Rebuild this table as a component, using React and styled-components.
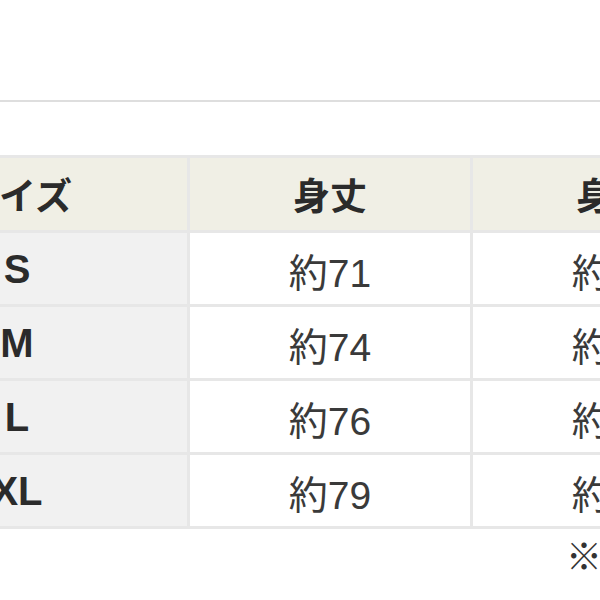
import React from 'react'
import styled, { createGlobalStyle } from 'styled-components'

const GlobalStyle = createGlobalStyle`
  html, body {
    margin: 0;
    padding: 0;
    background: #ffffff;
    overflow: hidden;
  }
  body {
    font-family: "Liberation Sans", "Noto Sans CJK JP", sans-serif;
    color: #333333;
  }
`

const rows = [
    { size: 'S', length: '約71', width: '約52', sleeve: '約20' },
    { size: 'M', length: '約74', width: '約55', sleeve: '約21' },
    { size: 'L', length: '約76', width: '約58', sleeve: '約22' },
    { size: 'XL', length: '約79', width: '約61', sleeve: '約23' },
]

const Page = styled.div`
  width: 600px;
  height: 600px;
  overflow: hidden;
`

const TopBar = styled.div`
  height: 100px;
  border-bottom: 2px solid #dedede;
`

const Table = styled.div`
  margin: 53px 0 0 -156px;
  width: max-content;
  display: grid;
  grid-template-columns: 340px 280px 280px 280px;
  grid-auto-rows: 71px;
  grid-template-rows: 72px;
  gap: 3px;
  padding: 3px;
  background: #e7e7e7;
`

const Cell = styled.div`
  display: flex;
  align-items: center;
  justify-content: center;
  padding-top: ${p => (p.$head ? '0' : '2px')};
  background: ${p => (p.$head ? '#f0efe5' : p.$side ? '#f1f1f1' : '#ffffff')};
  font-size: ${p => (p.$head ? '37px' : p.$side ? '40px' : '39px')};
  font-weight: ${p => (p.$head || p.$side ? 700 : 400)};
  color: ${p => (p.$head || p.$side ? '#2b2b2b' : '#3a3a3a')};
  white-space: nowrap;
`

const Note = styled.div`
  margin-top: 9px;
  padding-left: 566px;
  font-size: 36px;
  line-height: 40px;
  color: #333333;
  white-space: nowrap;
`

const App = () => {
    return (
        <Page>
            <GlobalStyle />
            <TopBar />
            <Table>
                <Cell $head>サイズ</Cell>
                <Cell $head>身丈</Cell>
                <Cell $head>身幅</Cell>
                <Cell $head>袖丈</Cell>
                {rows.map(r => (
                    <React.Fragment key={r.size}>
                        <Cell $side>{r.size}</Cell>
                        <Cell>{r.length}</Cell>
                        <Cell>{r.width}</Cell>
                        <Cell>{r.sleeve}</Cell>
                    </React.Fragment>
                ))}
            </Table>
            <Note>※単位はcmです。</Note>
        </Page>
    )
}

export default App
